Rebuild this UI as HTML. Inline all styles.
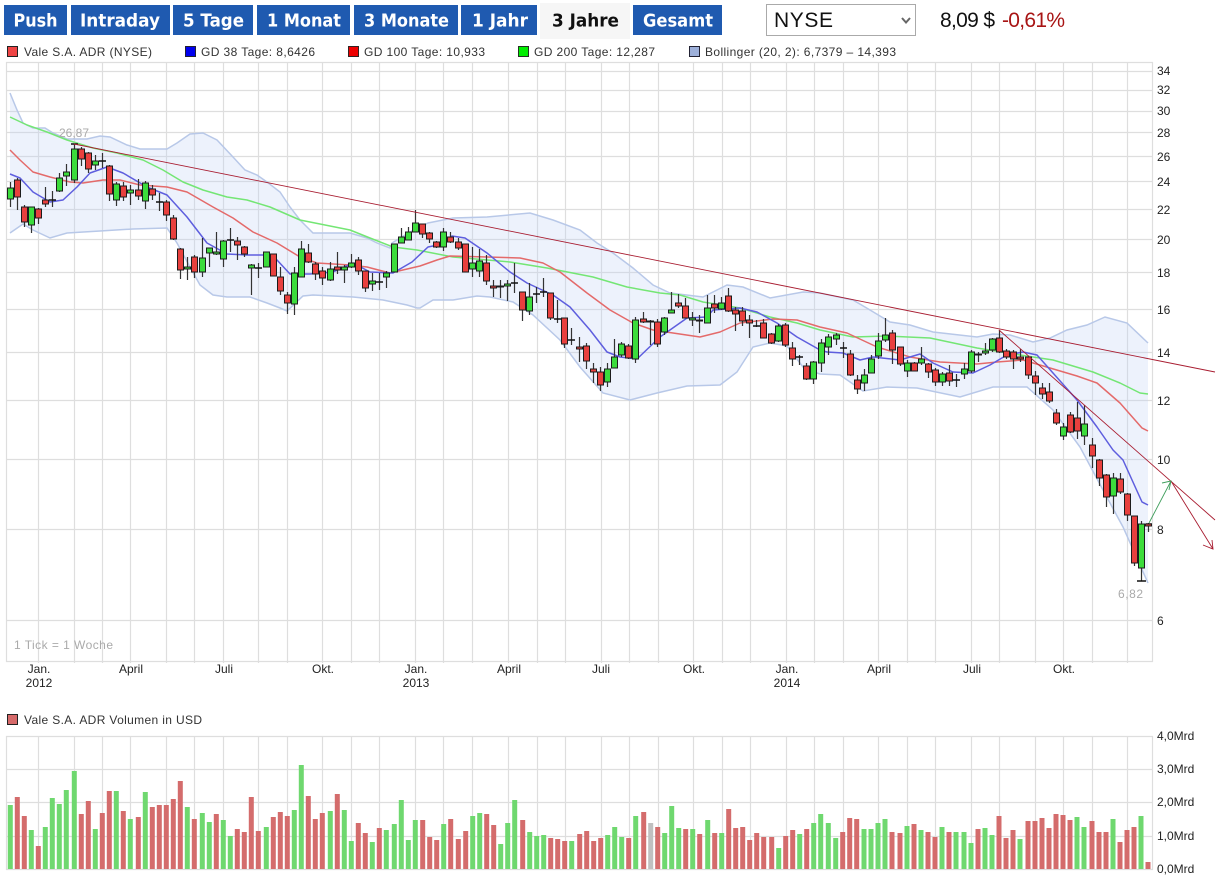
<!DOCTYPE html>
<html lang="de">
<head>
<meta charset="utf-8">
<title>Vale S.A. ADR</title>
<style>
html,body{margin:0;padding:0;background:#fff;width:1224px;height:878px;overflow:hidden}
svg{display:block}
text{font-family:"Liberation Sans",Arial,sans-serif;font-size:12px;fill:#333}
.b{font-family:"DejaVu Sans",Verdana,sans-serif;font-weight:700;font-size:17.5px;fill:#fff}
.ax{fill:#222}
.big{font-size:21px;fill:#111}
</style>
</head>
<body>
<svg width="1224" height="878" viewBox="0 0 1224 878" xmlns="http://www.w3.org/2000/svg">
<rect width="1224" height="878" fill="#fff"/>

<!-- tabs -->
<g fill="#1f5ab0">
<rect x="4" y="5" width="63" height="30"/>
<rect x="71" y="5" width="99" height="30"/>
<rect x="173" y="5" width="80" height="30"/>
<rect x="257" y="5" width="93" height="30"/>
<rect x="354" y="5" width="104" height="30"/>
<rect x="461" y="5" width="76" height="30"/>
<rect x="633" y="5" width="89" height="30"/>
</g>
<rect x="540" y="3" width="90" height="36" fill="#f6f6f6"/>
<text class="b" x="13.5" y="26.5" textLength="44" lengthAdjust="spacingAndGlyphs">Push</text>
<text class="b" x="80" y="26.5" textLength="80" lengthAdjust="spacingAndGlyphs">Intraday</text>
<text class="b" x="183" y="26.5" textLength="61" lengthAdjust="spacingAndGlyphs">5 Tage</text>
<text class="b" x="267" y="26.5" textLength="74" lengthAdjust="spacingAndGlyphs">1 Monat</text>
<text class="b" x="364" y="26.5" textLength="85" lengthAdjust="spacingAndGlyphs">3 Monate</text>
<text class="b" x="472" y="26.5" textLength="56" lengthAdjust="spacingAndGlyphs">1 Jahr</text>
<text class="b" x="552" y="26.5" textLength="67" lengthAdjust="spacingAndGlyphs" style="fill:#111">3 Jahre</text>
<text class="b" x="643" y="26.5" textLength="70" lengthAdjust="spacingAndGlyphs">Gesamt</text>

<!-- select -->
<rect x="766.5" y="4.5" width="149" height="31" fill="#fff" stroke="#aaa"/>
<text class="big" x="774" y="27" textLength="59">NYSE</text>
<path d="M902 18l4 4.5 4-4.5" fill="none" stroke="#666" stroke-width="2"/>

<!-- price -->
<text class="big" x="940" y="27" textLength="55">8,09 $</text>
<text class="big" x="1002" y="27" textLength="63" style="fill:#a81414">-0,61%</text>

<!-- legend -->
<rect x="7.5" y="46.5" width="10" height="10" fill="#ee4444" stroke="#222"/>
<text x="24" y="56" textLength="128">Vale S.A. ADR (NYSE)</text>
<rect x="185.5" y="46.5" width="10" height="10" fill="#0000ee" stroke="#223"/>
<text x="201" y="56" textLength="114">GD 38 Tage: 8,6426</text>
<rect x="348.5" y="46.5" width="10" height="10" fill="#ee0000" stroke="#322"/>
<text x="364" y="56" textLength="121">GD 100 Tage: 10,933</text>
<rect x="518.5" y="46.5" width="10" height="10" fill="#00ee00" stroke="#232"/>
<text x="534" y="56" textLength="121">GD 200 Tage: 12,287</text>
<rect x="689.5" y="46.5" width="10" height="10" fill="#9db0da" stroke="#223"/>
<text x="705" y="56" textLength="191">Bollinger (20, 2): 6,7379 – 14,393</text>

<!-- price grid -->
<g fill="none" stroke="#dedede" stroke-width="1.2">
<path d="M6.5 62.5H1152.5V661.5H6.5zM6.5 71.5H1152.5M6.5 90.5H1152.5M6.5 111.5H1152.5M6.5 132.5H1152.5M6.5 156.5H1152.5M6.5 181.5H1152.5M6.5 209.5H1152.5M6.5 239.5H1152.5M6.5 272.5H1152.5M6.5 309.5H1152.5M6.5 352.5H1152.5M6.5 400.5H1152.5M6.5 459.5H1152.5M6.5 529.5H1152.5M6.5 620.5H1152.5"/>
<path d="M38.5 62V663M74.5 62V663M102.5 62V663M130.5 62V663M166.5 62V663M194.5 62V663M223.5 62V663M258.5 62V663M287.5 62V663M322.5 62V663M351.5 62V663M379.5 62V663M415.5 62V663M443.5 62V663M472.5 62V663M508.5 62V663M537.5 62V663M565.5 62V663M601.5 62V663M629.5 62V663M658.5 62V663M693.5 62V663M722.5 62V663M750.5 62V663M786.5 62V663M814.5 62V663M843.5 62V663M878.5 62V663M907.5 62V663M935.5 62V663M971.5 62V663M999.5 62V663M1035.5 62V663M1063.5 62V663M1092.5 62V663M1127.5 62V663"/>
</g>

<!-- bollinger -->
<path d="M10 93L17 110L23 123L33 128L45 128L53 133L67 139L87 139L100 136L110 137L127 145L140 149L167 149L177 143L190 134L203 133L217 140L233 157L245 170L257 175L267 182L280 192L290 207L300 220L313 233L350 233L367 238L377 243L390 248L392 243L410 232L428 223L453 218L487 217L530 213L553 220L580 230L597 243L613 253L633 268L653 285L670 293L703 297L727 285L743 287L770 298L803 292L820 293L853 300L870 310L890 322L910 325L933 332L977 337L993 334L1010 335L1033 342L1050 338L1067 330L1087 325L1105 317L1127 323L1148 343L1148 583L1123 527L1103 490L1080 447L1053 410L1027 387L993 387L960 397L917 388L887 387L863 391L840 375L820 374L817 373L803 367L787 346L770 343L753 347L737 372L720 385L687 386L657 393L630 400L603 393L580 367L560 340L533 315L513 302L490 297L477 296L453 300L433 300L420 308L417 308L407 305L383 300L353 297L313 295L303 296L287 311L280 308L267 303L250 297L227 297L213 295L200 285L190 267L177 243L167 228L133 229L100 231L67 233L50 238L33 230L23 224L10 233Z" fill="#bcd0f4" fill-opacity=".27" stroke="none"/>
<path d="M10 93L17 110L23 123L33 128L45 128L53 133L67 139L87 139L100 136L110 137L127 145L140 149L167 149L177 143L190 134L203 133L217 140L233 157L245 170L257 175L267 182L280 192L290 207L300 220L313 233L350 233L367 238L377 243L390 248L392 243L410 232L428 223L453 218L487 217L530 213L553 220L580 230L597 243L613 253L633 268L653 285L670 293L703 297L727 285L743 287L770 298L803 292L820 293L853 300L870 310L890 322L910 325L933 332L977 337L993 334L1010 335L1033 342L1050 338L1067 330L1087 325L1105 317L1127 323L1148 343" fill="none" stroke="#b8c8e8" stroke-width="1.5"/>
<path d="M1148 583L1123 527L1103 490L1080 447L1053 410L1027 387L993 387L960 397L917 388L887 387L863 391L840 375L820 374L817 373L803 367L787 346L770 343L753 347L737 372L720 385L687 386L657 393L630 400L603 393L580 367L560 340L533 315L513 302L490 297L477 296L453 300L433 300L420 308L417 308L407 305L383 300L353 297L313 295L303 296L287 311L280 308L267 303L250 297L227 297L213 295L200 285L190 267L177 243L167 228L133 229L100 231L67 233L50 238L33 230L23 224L10 233" fill="none" stroke="#b8c8e8" stroke-width="1.5"/>

<!-- moving averages -->
<g fill="none" stroke-width="1.5" stroke-linejoin="round">
<path stroke="#74e674" d="M10 117L27 125L47 132L67 140L93 148L117 153L143 160L163 170L183 182L203 190L227 197L247 200L270 207L300 220L350 230L370 238L393 247L417 250L453 257L510 262L547 268L593 277L627 287L660 293L680 295L703 302L740 308L770 317L797 323L820 330L853 337L887 336L930 338L977 348L1020 355L1053 360L1093 372L1120 383L1140 393L1148 394"/>
<path stroke="#e46a6a" d="M10 150L20 160L33 172L50 177L70 182L83 183L103 180L120 180L140 185L167 187L187 192L213 207L233 218L253 232L277 243L300 257L317 263L350 265L367 267L390 273L420 266L437 260L450 256L487 257L520 258L543 263L560 272L587 293L610 310L633 323L653 330L673 333L700 337L720 332L740 323L773 319L797 320L820 327L847 333L877 347L910 357L940 362L977 364L997 362L1023 360L1050 368L1077 376L1097 383L1120 403L1142 428L1148 431"/>
<path stroke="#5e5ede" d="M10 174L20 178L33 192L50 202L63 200L77 187L90 173L107 167L123 173L147 187L167 195L187 217L207 243L227 254L247 255L263 255L277 260L290 274L310 274L333 272L353 263L370 272L393 273L412 262L428 247L438 245L452 236L465 238L487 253L510 272L527 283L553 295L570 307L590 330L607 352L620 357L637 359L660 337L687 318L707 317L713 310L740 308L757 312L777 323L797 337L820 350L827 352L843 353L860 360L873 357L900 360L920 354L933 363L953 372L973 373L990 365L1007 355L1023 352L1037 355L1053 373L1077 400L1097 427L1113 450L1123 460L1142 502L1148 505"/>
</g>

<!-- candle wicks -->
<path fill="none" stroke="#333" stroke-width="1.2" d="M10.5 182V207M17.5 178V210M24.5 205V227M31.5 207V233M38.5 208V224M45.5 187V207M52.5 191V207M59.5 173V192M66.5 164V186M74.5 144V183M81.5 147V166M88.5 152V173M95.5 155V170M102.5 153V168M109.5 165V201M116.5 182V206M123.5 182V201M130.5 185V205M138.5 179V200M145.5 181V209M152.5 185V200M159.5 193V211M166.5 200V221M173.5 215V240M180.5 248V279M187.5 257V280M194.5 255V278M202.5 238V277M209.5 248V267M216.5 232V255M223.5 240V267M230.5 228V252M237.5 237V260M244.5 246V257M251.5 264V295M258.5 263V278M280.5 267V295M287.5 292V314M294.5 267V315M301.5 241V277M308.5 244V263M315.5 262V280M322.5 267V285M330.5 262V281M337.5 252V274M344.5 265V283M351.5 254V268M358.5 257V275M365.5 271V292M372.5 273V291M379.5 273V290M386.5 271V288M401.5 228V243M408.5 227V240M415.5 210V232M422.5 224V238M429.5 232V243M436.5 241V248M443.5 228V251M450.5 232V243M458.5 238V250M472.5 247V277M479.5 249V277M486.5 255V285M493.5 280V297M500.5 280V298M507.5 280V301M514.5 263V293M522.5 292V321M529.5 283V315M536.5 287V303M543.5 278V297M550.5 293V320M557.5 300V323M564.5 318V348M571.5 328V345M579.5 337V362M586.5 343V369M593.5 363V383M600.5 367V391M607.5 363V387M614.5 339V368M621.5 342V357M628.5 344V359M635.5 317V363M643.5 312V323M650.5 320V345M657.5 319V347M664.5 317V335M671.5 292V313M678.5 294V308M685.5 298V318M692.5 312V326M699.5 315V333M707.5 295V323M714.5 295V313M721.5 297V310M728.5 288V312M735.5 307V331M742.5 307V326M749.5 315V338M756.5 320V327M763.5 319V338M771.5 333V344M778.5 324V342M785.5 323V347M792.5 342V366M799.5 355V365M806.5 363V380M813.5 361V384M821.5 339V372M828.5 334V355M836.5 333V345M843.5 342V358M850.5 350V376M857.5 375V394M864.5 369V391M871.5 355V373M878.5 333V359M885.5 318V342M892.5 330V364M900.5 347V366M907.5 360V377M914.5 362V371M921.5 347V365M928.5 363V378M935.5 368V386M942.5 372V386M949.5 365V386M956.5 374V387M964.5 363V379M971.5 350V373M978.5 352V362M985.5 343V355M992.5 338V352M999.5 330V353M1006.5 349V359M1013.5 350V369M1020.5 349V362M1028.5 356V379M1035.5 371V395M1042.5 383V399M1049.5 383V403M1056.5 409V425M1063.5 423V440M1070.5 412V433M1077.5 402V439M1084.5 405V445M1092.5 438V468M1099.5 459V486M1106.5 474V507M1113.5 473V514M1120.5 473V494M1127.5 493V521M1134.5 516V566M1141.5 521V581M1148.5 523V532"/>
<!-- doji ticks -->
<path fill="none" stroke="#111" stroke-width="1.4" d="M49 200h7M99 161h7M156 202h7M227 240h7M255 268h7M376 282h7M511 283h7M533 294h7M540 292h7M554 319h7M568 340h7M753 326h7M796 357h7M840 348h7M953 380h7M71 144h7M1137 581h9M1146 524h6"/>

<!-- green bodies -->
<path fill="#3cdc3c" stroke="#1c1c1c" stroke-width="1" d="M7.5 188h6V199h-6zM28.5 207h6V225h-6zM56.5 178h6V191h-6zM63.5 172h6V176h-6zM71.5 149h6V180h-6zM92.5 161h6V165h-6zM113.5 184h6V200h-6zM127.5 190h6V193h-6zM142.5 183h6V201h-6zM184.5 267h6V269h-6zM199.5 258h6V272h-6zM206.5 248h6V253h-6zM213.5 252h6V254h-6zM220.5 241h6V259h-6zM248.5 265h6V268h-6zM263.5 252h6V267h-6zM291.5 273h6V304h-6zM298.5 249h6V277h-6zM327.5 269h6V280h-6zM341.5 267h6V270h-6zM348.5 263h6V267h-6zM369.5 281h6V284h-6zM383.5 273h6V277h-6zM391.5 244h6V272h-6zM398.5 237h6V243h-6zM405.5 232h6V240h-6zM412.5 223h6V232h-6zM440.5 232h6V247h-6zM469.5 263h6V269h-6zM476.5 261h6V271h-6zM497.5 286h6V287h-6zM504.5 284h6V286h-6zM526.5 297h6V311h-6zM604.5 369h6V382h-6zM611.5 357h6V368h-6zM618.5 344h6V355h-6zM632.5 320h6V359h-6zM661.5 318h6V332h-6zM668.5 310h6V313h-6zM689.5 318h6V320h-6zM696.5 320h6V321h-6zM704.5 308h6V323h-6zM718.5 303h6V309h-6zM775.5 326h6V341h-6zM810.5 362h6V379h-6zM818.5 343h6V363h-6zM825.5 337h6V347h-6zM833.5 335h6V339h-6zM861.5 375h6V383h-6zM868.5 359h6V373h-6zM875.5 341h6V356h-6zM882.5 335h6V340h-6zM904.5 363h6V371h-6zM918.5 359h6V363h-6zM939.5 374h6V382h-6zM961.5 369h6V374h-6zM968.5 352h6V371h-6zM982.5 351h6V353h-6zM989.5 339h6V350h-6zM1060.5 427h6V436h-6zM1081.5 424h6V436h-6zM1110.5 478h6V496h-6zM1138.5 524h6V568h-6z"/>

<!-- red bodies -->
<path fill="#e8403e" stroke="#1c1c1c" stroke-width="1" d="M14.5 180h6V197h-6zM21.5 207h6V222h-6zM35.5 209h6V218h-6zM42.5 200h6V204h-6zM78.5 149h6V159h-6zM85.5 153h6V169h-6zM106.5 166h6V194h-6zM120.5 186h6V197h-6zM135.5 190h6V196h-6zM149.5 189h6V195h-6zM163.5 202h6V215h-6zM170.5 218h6V239h-6zM177.5 249h6V270h-6zM191.5 257h6V272h-6zM234.5 241h6V245h-6zM241.5 247h6V254h-6zM270.5 254h6V276h-6zM277.5 277h6V291h-6zM284.5 295h6V303h-6zM305.5 253h6V262h-6zM312.5 264h6V274h-6zM319.5 271h6V278h-6zM334.5 267h6V270h-6zM355.5 260h6V271h-6zM362.5 271h6V288h-6zM419.5 224h6V234h-6zM426.5 233h6V239h-6zM433.5 242h6V247h-6zM447.5 237h6V242h-6zM455.5 242h6V248h-6zM462.5 244h6V272h-6zM483.5 263h6V281h-6zM490.5 286h6V288h-6zM519.5 292h6V310h-6zM547.5 293h6V318h-6zM561.5 318h6V344h-6zM576.5 347h6V349h-6zM583.5 346h6V361h-6zM590.5 369h6V372h-6zM597.5 372h6V385h-6zM625.5 346h6V358h-6zM640.5 319h6V322h-6zM647.5 321h6V322h-6zM654.5 322h6V344h-6zM675.5 303h6V306h-6zM682.5 306h6V318h-6zM711.5 304h6V308h-6zM725.5 296h6V311h-6zM732.5 310h6V314h-6zM739.5 311h6V321h-6zM746.5 320h6V323h-6zM760.5 323h6V338h-6zM768.5 334h6V343h-6zM782.5 325h6V345h-6zM789.5 348h6V359h-6zM803.5 366h6V379h-6zM847.5 354h6V375h-6zM854.5 380h6V389h-6zM889.5 333h6V350h-6zM897.5 347h6V364h-6zM911.5 363h6V371h-6zM925.5 364h6V372h-6zM932.5 370h6V382h-6zM946.5 373h6V381h-6zM975.5 354h6V355h-6zM996.5 338h6V352h-6zM1003.5 351h6V357h-6zM1010.5 352h6V359h-6zM1017.5 357h6V359h-6zM1025.5 357h6V375h-6zM1032.5 376h6V383h-6zM1039.5 388h6V394h-6zM1046.5 392h6V401h-6zM1053.5 413h6V423h-6zM1067.5 415h6V432h-6zM1074.5 418h6V431h-6zM1089.5 445h6V456h-6zM1096.5 460h6V478h-6zM1103.5 475h6V497h-6zM1117.5 479h6V492h-6zM1124.5 494h6V515h-6zM1131.5 516h6V563h-6zM1145.5 524h6V526h-6z"/>

<!-- trend lines -->
<g fill="none" stroke-width="0.9">
<path stroke="#a81c30" d="M74 144L1215 372"/>
<path stroke="#a81c30" d="M999 330L1215 520"/>
<path stroke="#a81c30" d="M1171 481L1213 549M1203 545L1213 549L1212 540"/>
<path stroke="#3f9e5c" d="M1149 523L1171 481M1162 483L1171 481L1169 490"/>
</g>

<!-- high/low labels -->
<text x="59" y="137" textLength="30" style="fill:#aaa">26,87</text>
<text x="1118" y="598" textLength="25" style="fill:#aaa">6,82</text>
<text x="14" y="649" textLength="99" style="fill:#aaa">1 Tick = 1 Woche</text>

<!-- y axis -->
<g class="ax">
<text class="ax" x="1157" y="75">34</text>
<text class="ax" x="1157" y="94">32</text>
<text class="ax" x="1157" y="115">30</text>
<text class="ax" x="1157" y="137">28</text>
<text class="ax" x="1157" y="161">26</text>
<text class="ax" x="1157" y="186">24</text>
<text class="ax" x="1157" y="214">22</text>
<text class="ax" x="1157" y="244">20</text>
<text class="ax" x="1157" y="277">18</text>
<text class="ax" x="1157" y="314">16</text>
<text class="ax" x="1157" y="357">14</text>
<text class="ax" x="1157" y="405">12</text>
<text class="ax" x="1157" y="464">10</text>
<text class="ax" x="1157" y="534">8</text>
<text class="ax" x="1157" y="625">6</text>
</g>

<!-- x axis -->
<g text-anchor="middle">
<text class="ax" x="39" y="673" text-anchor="middle">Jan.</text>
<text class="ax" x="39" y="687" text-anchor="middle">2012</text>
<text class="ax" x="131" y="673" text-anchor="middle">April</text>
<text class="ax" x="224" y="673" text-anchor="middle">Juli</text>
<text class="ax" x="323" y="673" text-anchor="middle">Okt.</text>
<text class="ax" x="416" y="673" text-anchor="middle">Jan.</text>
<text class="ax" x="416" y="687" text-anchor="middle">2013</text>
<text class="ax" x="509" y="673" text-anchor="middle">April</text>
<text class="ax" x="601" y="673" text-anchor="middle">Juli</text>
<text class="ax" x="694" y="673" text-anchor="middle">Okt.</text>
<text class="ax" x="787" y="673" text-anchor="middle">Jan.</text>
<text class="ax" x="787" y="687" text-anchor="middle">2014</text>
<text class="ax" x="879" y="673" text-anchor="middle">April</text>
<text class="ax" x="972" y="673" text-anchor="middle">Juli</text>
<text class="ax" x="1064" y="673" text-anchor="middle">Okt.</text>
</g>

<!-- volume -->
<rect x="7.5" y="714.5" width="10" height="10" fill="#d66a6a" stroke="#222"/>
<text x="24" y="724" textLength="178">Vale S.A. ADR Volumen in USD</text>

<g fill="none" stroke="#dedede" stroke-width="1.2">
<path d="M6.5 736.5H1152.5V869.5H6.5zM6.5 769.5H1152.5M6.5 802.5H1152.5M6.5 836.5H1152.5"/>
<path d="M38.5 736V870M74.5 736V870M102.5 736V870M130.5 736V870M166.5 736V870M194.5 736V870M223.5 736V870M258.5 736V870M287.5 736V870M322.5 736V870M351.5 736V870M379.5 736V870M415.5 736V870M443.5 736V870M472.5 736V870M508.5 736V870M537.5 736V870M565.5 736V870M601.5 736V870M629.5 736V870M658.5 736V870M693.5 736V870M722.5 736V870M750.5 736V870M786.5 736V870M814.5 736V870M843.5 736V870M878.5 736V870M907.5 736V870M935.5 736V870M971.5 736V870M999.5 736V870M1035.5 736V870M1063.5 736V870M1092.5 736V870M1127.5 736V870"/>
</g>

<path fill="none" stroke="#6fd86f" stroke-width="5" d="M10.3 805V869M31.3 830V869M45.3 827V869M52.3 798V869M59.3 804V869M66.3 790V869M74.3 771V869M95.3 829V869M116.3 791V869M130.3 819V869M145.3 792V869M187.3 807V869M202.3 813V869M209.3 822V869M223.3 820V869M230.3 836V869M266.3 827V869M294.3 810V869M301.3 765V869M330.3 811V869M344.3 810V869M351.3 841V869M372.3 842V869M386.3 830V869M394.3 824V869M401.3 800V869M408.3 840V869M415.3 820V869M443.7 824V869M472.7 816V869M479.7 813V869M500.7 844V869M507.7 823V869M514.7 800V869M529.7 832V869M536.7 836V869M543.7 835V869M571.7 841V869M607.7 835V869M614.7 827V869M621.7 837V869M635.7 816V869M664.7 833V869M671.7 806V869M678.7 828V869M692.7 829V869M707.7 820V869M721.7 833V869M778.7 848V869M799.7 834V869M813.7 823V869M820.7 814V869M828.3 823V869M835.7 838V869M864 829V869M871 829V869M878 823V869M885 819V869M907 826V869M921 830V869M942 827V869M956 832V869M964 832V869M971 843V869M985 828V869M992 835V869M1020 839V869M1077 817V869M1084 827V869M1113 819V869M1141 816V869"/>
<path fill="none" stroke="#d46c6c" stroke-width="5" d="M17.3 797V869M24.3 816V869M38.3 846V869M81.3 814V869M88.3 801V869M102.3 813V869M109.3 791V869M123.3 811V869M138.3 817V869M152.3 807V869M159.3 805V869M166.3 805V869M173.3 799V869M180.3 781V869M194.3 819V869M216.3 814V869M237.3 829V869M244.3 832V869M251.3 797V869M258.3 831V869M273.3 817V869M280.3 812V869M287.3 816V869M308.3 796V869M315.3 819V869M322.3 813V869M337.3 794V869M358.3 823V869M365.3 833V869M379.3 828V869M422.7 820V869M429.7 837V869M436.7 840V869M450.7 819V869M458.3 839V869M465.7 831V869M486.7 814V869M493.7 825V869M522.7 820V869M550.7 838V869M557.7 839V869M564.7 841V869M579.7 834V869M586.7 831V869M593.7 841V869M600.7 838V869M628.7 838V869M643.7 812V869M657.7 827V869M685.7 829V869M699.7 834V869M714.7 833V869M728.7 809V869M735.7 828V869M742.7 827V869M749.7 840V869M756.7 833V869M763.7 837V869M771.7 837V869M785.7 836V869M792.7 830V869M806.7 829V869M842.7 832V869M849.7 818V869M856.7 819V869M892 832V869M900 833V869M914 824V869M928 832V869M935 837V869M949 832V869M978 829V869M999 816V869M1006 838V869M1013 830V869M1028 821V869M1035 821V869M1042 818V869M1049 828V869M1056 814V869M1063 815V869M1070 820V869M1092 821V869M1099 832V869M1106 832V869M1120 842V869M1127 830V869M1134 827V869M1148 862V869"/>
<path fill="none" stroke="#c0c0c0" stroke-width="5" d="M650.7 823V869"/>

<text class="ax" x="1157" y="740">4,0Mrd</text>
<text class="ax" x="1157" y="773">3,0Mrd</text>
<text class="ax" x="1157" y="806">2,0Mrd</text>
<text class="ax" x="1157" y="840">1,0Mrd</text>
<text class="ax" x="1157" y="873">0,0Mrd</text>
</svg>
</body>
</html>
